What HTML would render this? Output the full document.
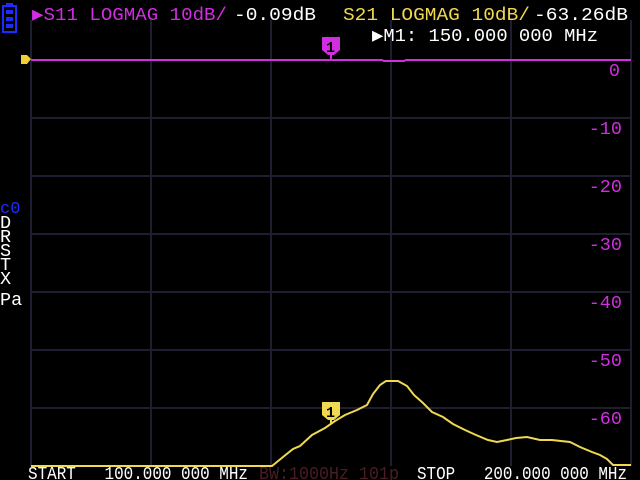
<!DOCTYPE html>
<html><head><style>
html,body{margin:0;padding:0;background:#000;width:640px;height:480px;overflow:hidden}
svg{display:block}
text{font-family:"Liberation Mono",monospace;font-size:18.5px;white-space:pre}
</style></head><body>
<svg width="640" height="480" viewBox="0 0 640 480" xmlns="http://www.w3.org/2000/svg" xml:space="preserve">
<rect width="640" height="480" fill="#000"/>
<g stroke="#1e1e30" stroke-width="2">
<line x1="31" y1="20" x2="31" y2="466"/>
<line x1="151" y1="20" x2="151" y2="466"/>
<line x1="271" y1="20" x2="271" y2="466"/>
<line x1="391" y1="20" x2="391" y2="466"/>
<line x1="511" y1="20" x2="511" y2="466"/>
<line x1="631" y1="20" x2="631" y2="466"/>
<line x1="31" y1="118" x2="631" y2="118"/>
<line x1="31" y1="176" x2="631" y2="176"/>
<line x1="31" y1="234" x2="631" y2="234"/>
<line x1="31" y1="292" x2="631" y2="292"/>
<line x1="31" y1="350" x2="631" y2="350"/>
<line x1="31" y1="408" x2="631" y2="408"/>
</g>
<rect x="3" y="6" width="13" height="26" fill="none" stroke="#1a2cff" stroke-width="2"/>
<rect x="6" y="3" width="7" height="3" fill="#1a2cff"/>
<rect x="6" y="10" width="7" height="4" fill="#1a2cff"/>
<rect x="6" y="17" width="7" height="4" fill="#1a2cff"/>
<rect x="6" y="24" width="7" height="4" fill="#1a2cff"/>
<polyline points="31,60 382,60 384,61 404,61 406,60 631,60" fill="none" stroke="#d02ee0" stroke-width="2"/>
<polygon points="21,55 27,55 31,59 27,64 21,64" fill="#f0d030"/>
<polyline fill="none" stroke="#f0d850" stroke-width="2" points="31,466 272,466 283,457 293,449 300,446 312,435 325,428 335,421 345,415 357,410 367,405 373,394 380,385 386,381 398,381 407,386 414,395 423,403 432,412 443,417 453,424 465,430 476,435 488,440 497,442 507,440 516,438 527,437 540,440 552,440 570,442 580,447 592,452 600,455 607,459 613,465 631,465"/>
<path d="M322,37 H340 V50 L334,55 H328 L322,50 Z" fill="#d02ee0"/>
<line x1="331" y1="55" x2="331" y2="59" stroke="#d02ee0" stroke-width="2"/>
<text x="326" y="52" fill="#000" style="font-size:15px;font-weight:bold">1</text>
<path d="M322,402 H340 V415 L334,420 H328 L322,415 Z" fill="#f0d850"/>
<line x1="331" y1="420" x2="331" y2="424" stroke="#f0d850" stroke-width="2"/>
<text x="326" y="417" fill="#000" style="font-size:15px;font-weight:bold">1</text>
<text x="32" y="20" fill="#d02ee0" textLength="195" lengthAdjust="spacingAndGlyphs">▶S11 LOGMAG 10dB/</text>
<text x="234" y="20" fill="#fff" textLength="82" lengthAdjust="spacingAndGlyphs">-0.09dB</text>
<text x="343" y="20" fill="#f0d850" textLength="187" lengthAdjust="spacingAndGlyphs">S21 LOGMAG 10dB/</text>
<text x="534" y="20" fill="#fff" textLength="94" lengthAdjust="spacingAndGlyphs">-63.26dB</text>
<text x="372" y="41" fill="#fff" textLength="226" lengthAdjust="spacingAndGlyphs">▶M1: 150.000 000 MHz</text>
<g fill="#d02ee0" text-anchor="end" style="font-size:19.5px">
<text x="620" y="76">0</text>
<text x="622" y="134">-10</text>
<text x="622" y="192">-20</text>
<text x="622" y="250">-30</text>
<text x="622" y="308">-40</text>
<text x="622" y="366">-50</text>
<text x="622" y="424">-60</text>
</g>
<text x="0" y="213" fill="#1a2cff" style="font-size:17px">c0</text>
<g fill="#fff" style="font-size:17px">
<text x="0" y="228">D</text><text x="0" y="242">R</text><text x="0" y="256">S</text>
<text x="0" y="270">T</text><text x="0" y="284">X</text><text x="0" y="305">Pa</text>
</g>
<text x="28" y="479" fill="#fff" textLength="220" lengthAdjust="spacingAndGlyphs">START   100.000 000 MHz</text>
<text x="259" y="479" fill="#4a1c24" textLength="140" lengthAdjust="spacingAndGlyphs">BW:1000Hz 101p</text>
<text x="417" y="479" fill="#fff" textLength="210" lengthAdjust="spacingAndGlyphs">STOP   200.000 000 MHz</text>
</svg>
</body></html>
